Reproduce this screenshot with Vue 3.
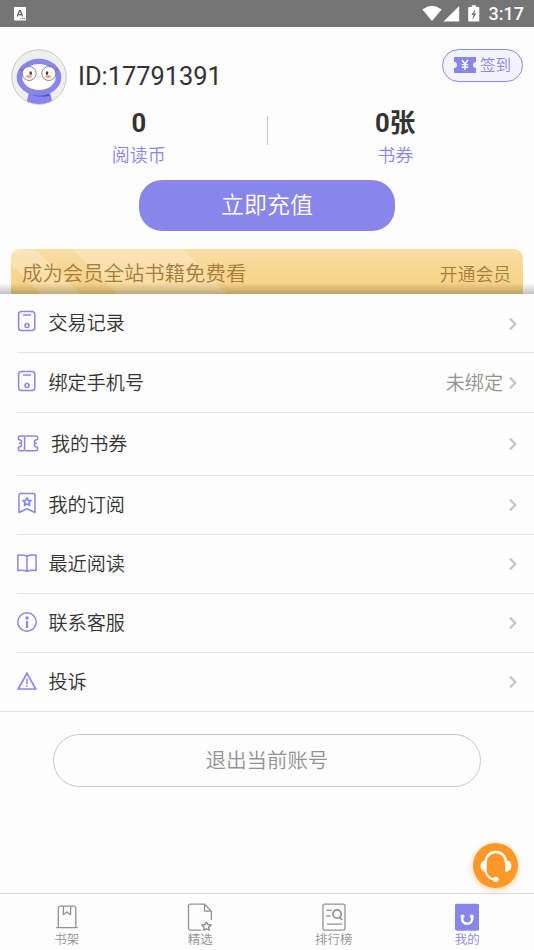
<script setup>
const rows = [
  { label: '交易记录', icon: 'phone', height: 59 },
  { label: '绑定手机号', icon: 'phone', height: 60, note: '未绑定' },
  { label: '我的书券', icon: 'ticket', height: 63 },
  { label: '我的订阅', icon: 'bookmark', height: 59 },
  { label: '最近阅读', icon: 'book', height: 59 },
  { label: '联系客服', icon: 'info', height: 59 },
  { label: '投诉', icon: 'warn', height: 59 },
]
const tabs = [
  { label: '书架', icon: 'shelf' },
  { label: '精选', icon: 'pick' },
  { label: '排行榜', icon: 'rank' },
  { label: '我的', icon: 'mine' },
]
</script>

<template>
  <div class="screen">
    <header class="status">
      <svg class="ime" width="12" height="14" viewBox="0 0 12 14">
        <rect width="12" height="13.4" rx="1" fill="#fff" />
        <path d="M3.3 9.4 5.5 3.6h.8l2.2 5.8M4.2 7.6h3.4" fill="none" stroke="#666" stroke-width="1.4" />
        <path d="M6.3 11.6h5" stroke="#777" stroke-width="1" stroke-dasharray="1.2 .6" />
      </svg>
      <div class="status-right">
        <svg width="60" height="20" viewBox="0 0 60 20" fill="#fff">
          <path d="M.4 6.4Q10 -1 19.6 6.4L10 18z" />
          <path d="M37.2 3v15.4H21.5z" />
          <path d="M47 4h2.7V2.3h4.4V4h2.4q.8 0 .8.8v13q0 .8-.8.8H47q-.8 0-.8-.8v-13q0-.8.8-.8z" />
          <path d="M53.4 6.2 49.2 12h2.1l-1 4.6 4.2-6h-2.1z" fill="#757575" />
        </svg>
        <span class="time">3:17</span>
      </div>
    </header>

    <section class="profile">
      <svg class="avatar" width="56" height="56" viewBox="0 0 56 56">
        <defs><clipPath id="face"><circle cx="28" cy="28" r="27" /></clipPath></defs>
        <circle cx="28" cy="28" r="27.3" fill="#efeff0" stroke="#c9c9cc" stroke-width="1" />
        <g clip-path="url(#face)">
          <path d="M18 43h21l3 13H15z" fill="#8986eb" />
          <ellipse cx="28" cy="28.2" rx="22.3" ry="18.4" fill="#8986eb" />
          <path d="M18.5 45q9.5 3.6 19.5 0l.6 1.8Q28 49.5 18.5 45z" fill="#514ec0" />
          <ellipse cx="28" cy="28" rx="16.7" ry="13" fill="#fff" />
        </g>
        <g fill="none" stroke="#555562" stroke-width=".7">
          <circle cx="18.2" cy="24.5" r="7" fill="#fff" /><circle cx="37.8" cy="24.5" r="7" fill="#fff" />
          <path d="M11.2 22 9.7 20M44.8 22l1.5-2" />
        </g>
        <g fill="#444"><ellipse cx="19.7" cy="24.1" rx="1.3" ry="1.9" /><ellipse cx="36" cy="24.1" rx="1.3" ry="1.9" /></g>
        <g fill="#ff946f"><ellipse cx="18" cy="27.6" rx="3" ry="1.4" /><ellipse cx="37.3" cy="27.6" rx="3" ry="1.4" /></g>
        <path d="M26 27.6q2 1 4 0" fill="none" stroke="#ffb8a0" stroke-width=".8" />
      </svg>
      <span class="uid">ID:17791391</span>
      <div class="sign">
        <svg width="22" height="16" viewBox="0 0 22 16">
          <path d="M0 0h22v5a3 3 0 0 0 0 6v5H0v-5a3 3 0 0 0 0-6z" fill="#8986eb" />
          <path d="m8 3 3 4 3-4M11 7v6M7.8 7.6h6.4M7.8 10.3h6.4" fill="none" stroke="#fff" stroke-width="1.4" />
        </svg>
        <span>签到</span>
      </div>
    </section>

    <section class="stats">
      <div class="stat"><b>0</b><span>阅读币</span></div>
      <i class="bar"></i>
      <div class="stat"><b>0张</b><span>书券</span></div>
    </section>
    <button class="recharge">立即充值</button>

    <section class="vip-wrap">
      <div class="vip">
        <svg class="streaks" width="512" height="45" viewBox="0 0 512 45">
          <path d="M0 0h24l46 45h-40L0 15z" fill="#fff" opacity=".24" />
          <path d="M61 0h111l44 45H106z" fill="#fff" opacity=".22" />
        </svg>
        <span class="vip-text">成为会员全站书籍免费看</span>
        <span class="vip-link">开通会员</span>
      </div>
    </section>

    <nav class="list">
      <div v-for="row in rows" :key="row.label" class="row" :class="row.icon" :style="{ height: row.height + 'px' }">
        <svg class="icon" :width="row.icon === 'ticket' ? 22 : 20" height="22" :viewBox="row.icon === 'ticket' ? '0 0 22 22' : '0 0 20 22'" fill="none" stroke="#8986eb" stroke-width="1.5" stroke-linejoin="round">
          <g v-if="row.icon === 'phone'">
            <rect x="1.6" y="1.5" width="16.2" height="19" rx="2.8" />
            <path d="M6 5h8" /><circle cx="10" cy="15.4" r="2" />
          </g>
          <g v-else-if="row.icon === 'ticket'">
            <path d="M7.6 18.1V4.5Q7 4 5.7 4H3Q1.5 4 1.5 5.5v2q3 .5 3 2t-1.8 1.8q1.8.4 1.8 1.9t-3 2v2.1q0 1.5 1.5 1.5h2.7q1.3 0 1.9-.7" />
            <path d="M8 4.4Q8.8 4 9.8 4h9q1.8 0 1.8 1.5v2q-3.3.5-3.3 2t1.9 1.8q-1.900.4-1.900 1.900t3.300 2v2.100q0 1.500-1.800 1.500h-9q-1 0-1.800-.5" />
          </g>
          <g v-else-if="row.icon === 'bookmark'">
            <path d="M2 20.5V3.3Q2 1.5 3.8 1.5h12.4Q18 1.5 18 3.3v17.2L10 16.8z" />
            <path d="m10 5.8 1.2 2.5 2.8.4-2 1.9.5 2.8-2.5-1.3-2.5 1.3.5-2.8-2-1.9 2.8-.4z" stroke-width="1.7" />
          </g>
          <g v-else-if="row.icon === 'book'">
            <path d="M10 4.2Q6 2.3.9 3.3v15.3q5-1 9.1.7 4.1-1.7 9.1-.7V3.3Q14 2.3 10 4.2zv15.1" />
          </g>
          <g v-else-if="row.icon === 'info'">
            <circle cx="10" cy="11" r="9.2" />
            <path d="M10 10v7" stroke-width="2.2" /><circle cx="10" cy="7" r="1.7" fill="#8986eb" stroke="none" />
          </g>
          <g v-else>
            <path d="M10 3.2 1.3 19h17.4z" stroke-linejoin="miter" stroke-width="1.7" />
            <path d="M10 8.5v5.8M10 15.4v1.7" />
          </g>
        </svg>
        <span class="label">{{ row.label }}</span>
        <span v-if="row.note" class="note">{{ row.note }}</span>
        <svg class="chev" width="8" height="14" viewBox="0 0 8 14"><path d="m1 1.6 5.3 5.4L1 12.4" fill="none" stroke="#c7c7cb" stroke-width="2.3" /></svg>
      </div>
    </nav>

    <button class="logout">退出当前账号</button>

    <div class="service">
      <svg width="45" height="45" viewBox="0 0 46 46" fill="none" stroke="#fff">
        <path d="M13 20v-.5a10.3 10.3 0 0 1 20.6 0v.5" stroke-width="2.4" />
        <path d="M14 17.3v12.2Q8 29.2 7.7 23.4q.3-5.4 6.3-6.1zM33 17.3v12.2q6-.3 6.3-6.1-.3-5.4-6.3-6.1z" fill="#fff" stroke="none" />
        <path d="M12.7 28.5q1.8 8 10.5 9" stroke-width="2.2" /><circle cx="23.4" cy="37.2" r="2.6" fill="#fff" stroke="none" />
      </svg>
    </div>

    <footer class="tabs">
      <div v-for="tab in tabs" :key="tab.label" class="tab" :class="{ active: tab.icon === 'mine' }">
        <svg width="26" height="28" viewBox="0 0 26 28" fill="none" stroke="#929292" stroke-width="1.3" stroke-linejoin="round">
          <g v-if="tab.icon === 'shelf'">
            <path d="M2.2 24.6h21.6M4.3 24.6V5q0-1.7 1.8-1.9H20q1.8.2 1.8 1.9v19.6" />
            <path d="M9.4 3.2v8.5l3.6-2.8 3.6 2.8V3.2" />
          </g>
          <g v-else-if="tab.icon === 'pick'">
            <path d="M14 27.1H3.3q-1.8 0-1.8-1.8V3q0-1.8 1.8-1.8h14.2l6.8 7v9M17.5 1.2v7h6.8" />
            <path d="m19.4 19 1.4 2.6 3.1.5-2.2 2.1.5 3-2.8-1.4-2.8 1.4.5-3-2.2-2.1 3.1-.5z" stroke-width="1.5" />
          </g>
          <g v-else-if="tab.icon === 'rank'">
            <rect x="2" y="1.2" width="22" height="26" rx="1.8" />
            <path d="M5.3 7.3h5.4M5.3 13h4M6 21.2h15" />
            <circle cx="16" cy="11" r="4.2" stroke-width="1.7" /><path d="m18.5 14 2.6 3" stroke-width="1.7" />
          </g>
          <g v-else stroke="none">
            <rect x="1" y=".7" width="24" height="27" rx="1.8" fill="#8986eb" />
            <circle cx="8.5" cy="13.3" r="1.9" fill="#fff" /><circle cx="17.8" cy="13.3" r="1.9" fill="#fff" />
            <path d="M8 14.2q0 6.5 5.2 6.5t5.1-6.5" fill="none" stroke="#fff" stroke-width="2.4" />
          </g>
        </svg>
        <span>{{ tab.label }}</span>
      </div>
    </footer>
  </div>
</template>

<style>
body { background: #fdfdfd; }
</style>

<style scoped>
.screen { position: relative; box-sizing: border-box; width: 534px; height: 950px; overflow: hidden; display: flex; flex-direction: column; background: #fdfdfd; color: #333; font-family: Roboto, "Noto Sans CJK SC", sans-serif; font-weight: 350; }
.screen svg { display: block; flex: none; }
button { margin: 0; padding: 0; border: 0; font-family: inherit; font-weight: inherit; }
.status { flex: none; height: 27px; background: #757575; display: flex; justify-content: space-between; align-items: center; padding: 0 10px 0 14px; }
.status-right { display: flex; align-items: center; gap: 7px; height: 27px; }
.status-right svg { margin-top: -1px; }
.time { color: #fff; font-size: 18px; line-height: 27px; font-weight: 500; }
.profile { flex: none; height: 78px; display: flex; align-items: flex-start; padding: 22px 11px 0; box-sizing: border-box; }
.uid { font-size: 25.4px; font-weight: 400; line-height: 30px; margin: 12px 0 0 11px; flex: 1; }
.sign { box-sizing: border-box; width: 81px; height: 33px; border: 1px solid #8986eb; border-radius: 17px; background: #f3f2fe; color: #8986eb; display: flex; align-items: center; gap: 4px; padding-left: 11px; font-size: 15.5px; line-height: 30px; }
.sign svg { margin-top: -1px; }
.stats { flex: none; height: 75px; display: flex; align-items: flex-start; padding: 0 11px; }
.stat { flex: 1; display: flex; flex-direction: column; align-items: center; }
.stat b { font-size: 25.6px; line-height: 34px; margin-top: 1px; font-weight: 700; }
.stat span { font-size: 18px; line-height: 26px; color: #8986eb; margin-top: 3px; }
.bar { width: 1px; height: 29px; margin-top: 11px; background: #c9c9c9; }
.recharge { flex: none; align-self: center; width: 256px; height: 51px; border-radius: 23px; background: #8986eb; color: #fff; font-size: 23px; line-height: 51px; }
.vip-wrap { position: relative; flex: none; padding: 18px 11px 0; height: 45px; overflow: hidden; }
.vip-wrap::after { content: ""; position: absolute; left: 0; right: 0; bottom: 0; height: 11px; background: linear-gradient(rgba(0,0,0,0), rgba(0,0,0,.23)); }
.vip { position: relative; height: 45px; border-radius: 9px 9px 0 0; overflow: hidden; background: linear-gradient(#f9dda3, #f7d080); display: flex; justify-content: space-between; padding: 0 12px 0 11px; color: #a67c3c; }
.streaks { position: absolute; left: 0; top: 0; }
.vip-text { position: relative; font-size: 20.4px; line-height: 50px; }
.vip-link { position: relative; font-size: 17.8px; line-height: 51px; }
.list { flex: none; display: flex; flex-direction: column; }
.row { box-sizing: border-box; margin-left: 17px; padding-right: 17px; display: flex; align-items: center; border-bottom: 1px solid #e5e5e5; }
.row:last-child { margin-left: 0; padding-left: 17px; }
.row .icon { margin-top: -4px; margin-right: 11.5px; }
.row.phone .icon { margin-left: -.5px; margin-right: 12px; }
.row.ticket .icon { margin-top: -2px; margin-right: 12px; }
.row.book .icon, .row.info .icon, .row.warn .icon { margin-top: -2px; }
.label { flex: 1; font-size: 19.1px; line-height: 28px; margin-top: 2px; }
.note { color: #929292; font-size: 19.1px; line-height: 28px; margin: 2px 6px 0 0; }
.row.ticket .label { margin-top: 1px; }
.chev { margin-top: 0; }
.row.phone .chev { margin-top: 1px; }
.logout { flex: none; align-self: center; box-sizing: border-box; width: 428px; height: 53px; margin-top: 22px; border: 1px solid #c8c8c8; border-radius: 27px; background: #fdfdfd; color: #929292; font-size: 20.4px; padding-bottom: 4px; }
.service { position: absolute; left: 472.5px; top: 842.5px; width: 45px; height: 45px; border-radius: 50%; background: #ff9827; box-shadow: 0 2px 6px rgba(255,152,39,.45); }
.tabs { box-sizing: border-box; flex: none; height: 57px; margin-top: auto; border-top: 1px solid #dcdcdc; display: flex; background: #fdfdfd; }
.tab { flex: 1; display: flex; flex-direction: column; align-items: center; padding-top: 9px; color: #929292; font-size: 12.5px; line-height: 18px; }
.tab.active { color: #8986eb; }
</style>
